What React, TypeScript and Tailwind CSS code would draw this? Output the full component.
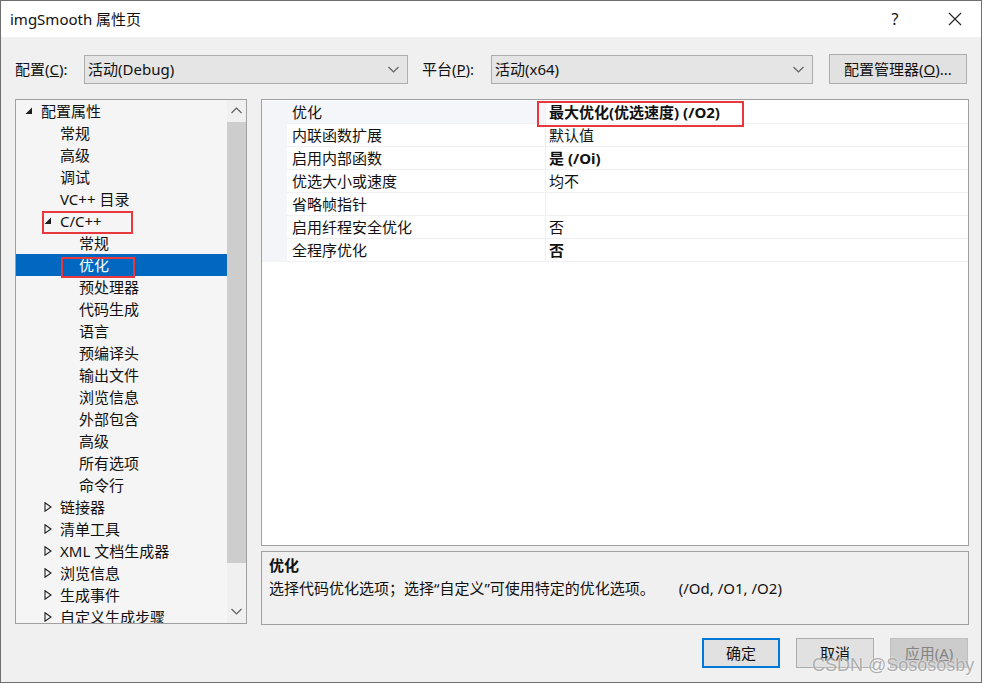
import React from "react";

type Node = { t: string; l: number; exp?: "open" | "closed"; sel?: boolean; box?: "cpp" | "opt" };

const tree: Node[] = [
  { t: "配置属性", l: 0, exp: "open" },
  { t: "常规", l: 1 },
  { t: "高级", l: 1 },
  { t: "调试", l: 1 },
  { t: "VC++ 目录", l: 1 },
  { t: "C/C++", l: 1, exp: "open", box: "cpp" },
  { t: "常规", l: 2 },
  { t: "优化", l: 2, sel: true, box: "opt" },
  { t: "预处理器", l: 2 },
  { t: "代码生成", l: 2 },
  { t: "语言", l: 2 },
  { t: "预编译头", l: 2 },
  { t: "输出文件", l: 2 },
  { t: "浏览信息", l: 2 },
  { t: "外部包含", l: 2 },
  { t: "高级", l: 2 },
  { t: "所有选项", l: 2 },
  { t: "命令行", l: 2 },
  { t: "链接器", l: 1, exp: "closed" },
  { t: "清单工具", l: 1, exp: "closed" },
  { t: "XML 文档生成器", l: 1, exp: "closed" },
  { t: "浏览信息", l: 1, exp: "closed" },
  { t: "生成事件", l: 1, exp: "closed" },
  { t: "自定义生成步骤", l: 1, exp: "closed" },
];

const props = [
  { n: "优化", v: "最大优化(优选速度) (/O2)", b: true },
  { n: "内联函数扩展", v: "默认值" },
  { n: "启用内部函数", v: "是 (/Oi)", b: true },
  { n: "优选大小或速度", v: "均不" },
  { n: "省略帧指针", v: "" },
  { n: "启用纤程安全优化", v: "否" },
  { n: "全程序优化", v: "否", b: true },
];

const indent: Record<number, string> = { 0: "pl-[9px]", 1: "pl-[28px]", 2: "pl-[47px]" };

function Chevron({ up }: { up?: boolean }) {
  return (
    <svg width="11" height="7" viewBox="0 0 11 7" className="shrink-0">
      <polyline
        points={up ? "0.5,6 5.5,1 10.5,6" : "0.5,1 5.5,6 10.5,1"}
        fill="none"
        stroke="#606060"
        strokeWidth="1.2"
      />
    </svg>
  );
}

function Arrow({ exp }: { exp?: "open" | "closed" }) {
  if (!exp) return <span className="w-[16px] shrink-0" />;
  return (
    <span className="w-[16px] shrink-0 flex items-center">
      {exp === "open" ? (
        <svg width="8" height="8" viewBox="0 0 8 8">
          <polygon points="7,0.5 7,7 0.5,7" fill="#1e1e1e" />
        </svg>
      ) : (
        <svg width="8" height="10" viewBox="0 0 8 10">
          <polygon points="1,0.8 7,5 1,9.2" fill="none" stroke="#1e1e1e" strokeWidth="1.1" />
        </svg>
      )}
    </span>
  );
}

function Dropdown({ value, w }: { value: string; w: string }) {
  return (
    <div
      className={`${w} h-[29px] border border-[#adadad] bg-[#e5e5e5] flex items-center justify-between pl-[3px] pr-[8px]`}
    >
      <span>{value}</span>
      <Chevron />
    </div>
  );
}

export default function App() {
  return (
    <div className="w-[984px] h-[684px] bg-white font-['Noto_Sans','Noto_Sans_CJK_SC',sans-serif] text-[15px] text-[#111]">
      <div className="relative w-[982px] h-[683px] border border-[#6f6f6f] bg-[#f0f0f0] flex flex-col">
        {/* title bar */}
        <div className="h-[36px] bg-white flex items-center pl-[9px] shrink-0">
          <span className="flex-1">imgSmooth 属性页</span>
          <span className="w-[20px] text-center text-[16px] mr-[43px]">?</span>
          <svg width="14" height="14" viewBox="0 0 14 14" className="mr-[19px]">
            <path d="M1 1 L13 13 M13 1 L1 13" stroke="#222" strokeWidth="1.1" />
          </svg>
        </div>

        {/* config row */}
        <div className="flex items-center pl-[14px] pt-[17px] shrink-0">
          <span className="w-[69px]">
            配置(<span className="underline">C</span>):
          </span>
          <Dropdown value="活动(Debug)" w="w-[324px]" />
          <span className="w-[69px] ml-[14px]">
            平台(<span className="underline">P</span>):
          </span>
          <Dropdown value="活动(x64)" w="w-[322px]" />
          <div className="ml-[16px] w-[138px] h-[30px] border border-[#adadad] bg-[#e1e1e1] flex items-center justify-center">
            配置管理器(<span className="underline">O</span>)...
          </div>
        </div>

        {/* main */}
        <div className="flex pl-[14px] pt-[15px] shrink-0">
          {/* tree */}
          <div className="w-[232px] h-[525px] border border-[#a0a0a0] bg-[#f5f5f5] flex overflow-hidden">
            <div className="flex-1 flex flex-col overflow-hidden">
              {tree.map((n, i) => (
                <div
                  key={i}
                  className={`relative h-[22px] shrink-0 flex items-center ${indent[n.l]} ${
                    n.sel ? "bg-[#0068c0] text-white" : ""
                  }`}
                >
                  <Arrow exp={n.exp} />
                  <span className="whitespace-nowrap">{n.t}</span>
                  {n.box === "cpp" && (
                    <span className="absolute left-[26px] top-[1px] w-[91px] h-[23px] border-2 border-[#e8383d]" />
                  )}
                  {n.box === "opt" && (
                    <span className="absolute left-[45px] top-[3px] w-[74px] h-[21px] border-2 border-[#e8383d]" />
                  )}
                </div>
              ))}
            </div>
            {/* scrollbar */}
            <div className="w-[19px] bg-[#f0f0f0] flex flex-col">
              <div className="h-[21px] flex items-center justify-center">
                <Chevron up />
              </div>
              <div className="h-[441px] bg-[#cdcdcd] mt-[1px]" />
              <div className="flex-1" />
              <div className="h-[24px] flex items-center justify-center">
                <Chevron />
              </div>
            </div>
          </div>

          {/* right column */}
          <div className="ml-[14px] w-[708px] flex flex-col">
            <div className="relative h-[447px] border border-[#a0a0a0] bg-white pt-[1px]">
              {props.map((p, i) => (
                <div key={i} className="h-[23px] flex">
                  <div className="w-[25px] bg-[#f3f5f9]" />
                  <div
                    className={`w-[259px] flex items-center pl-[5px] border-b border-[#eef0f4] border-r ${
                      i === 0 ? "bg-[#f4f6f9]" : ""
                    }`}
                  >
                    {p.n}
                  </div>
                  <div
                    className={`flex-1 flex items-center pl-[3px] border-b border-[#eef0f4] ${
                      p.b ? "font-bold" : ""
                    }`}
                  >
                    {p.v}
                  </div>
                </div>
              ))}
              <span className="absolute left-[275px] top-[1px] w-[207px] h-[26px] border-2 border-[#e8383d]" />
            </div>
            <div className="mt-[5px] h-[74px] border border-[#a0a0a0] pl-[7px] pt-[2px]">
              <div className="font-bold leading-[22px]">优化</div>
              <div className="leading-[24px] flex">
                <span>选择代码优化选项；选择“自定义”可使用特定的优化选项。</span>
                <span className="ml-[24px]">(/Od, /O1, /O2)</span>
              </div>
            </div>
          </div>
        </div>

        {/* buttons */}
        <div className="flex justify-end pr-[13px] pt-[13px]">
          <div className="w-[78px] h-[30px] border-2 border-[#0078d7] bg-[#e1e1e1] flex items-center justify-center">
            确定
          </div>
          <div className="ml-[16px] w-[78px] h-[30px] border border-[#adadad] bg-[#e1e1e1] flex items-center justify-center">
            取消
          </div>
          <div className="ml-[16px] w-[78px] h-[30px] border border-[#bfbfbf] bg-[#cccccc] text-[#838383] flex items-center justify-center">
            应用(<span className="underline">A</span>)
          </div>
        </div>

        {/* watermark */}
        <div className="absolute left-[811px] top-[651px] whitespace-nowrap text-[18px] leading-[26px] text-[#8c8c8c]/70 font-['Liberation_Sans',sans-serif] [text-shadow:0_0_2px_#fff]">
          CSDN @Sosososby
        </div>
      </div>
    </div>
  );
}
